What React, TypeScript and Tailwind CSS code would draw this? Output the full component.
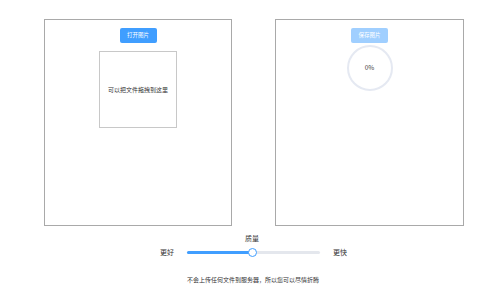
import React from "react";

const font = { fontFamily: '"Noto Sans CJK SC", "Noto Sans", sans-serif' };

export default function App() {
  return (
    <div className="w-[500px] h-[288px] bg-white overflow-hidden" style={font}>
      <div className="flex pl-[44px] pt-[19px] gap-[43px]">
        <div className="w-[188px] h-[207px] border border-[#a9a9a9] flex flex-col items-center pt-[8px]">
          <div className="w-[37px] h-[15px] rounded-[2px] bg-[#409eff] text-white text-[5.5px] flex items-center justify-center">
            打开图片
          </div>
          <div className="mt-[8px] w-[78px] h-[77px] border border-[#c8c8c8] flex items-center justify-center text-[6px] text-[#333]">
            可以把文件拖拽到这里
          </div>
        </div>
        <div className="w-[189px] h-[207px] border border-[#a9a9a9] flex flex-col items-center pt-[8px]">
          <div className="w-[37px] h-[15px] rounded-[2px] bg-[#a0cfff] text-white text-[5.5px] flex items-center justify-center">
            保存图片
          </div>
          <div className="mt-[2px] w-[46px] h-[46px] rounded-full border-[2.5px] border-[#e5e9f2] flex items-center justify-center text-[6.5px] text-[#444]">
            0%
          </div>
        </div>
      </div>
      <div className="flex justify-center pl-[4px] mt-[9px] text-[7px] leading-none text-[#333]">质量</div>
      <div className="flex items-center mt-[4px] h-[12px] pl-[160px]">
        <span className="text-[7px] text-[#333] w-[16px]">更好</span>
        <div className="relative ml-[11px] w-[133px] h-[3px] rounded-full bg-[#e4e7ed]">
          <div className="absolute left-0 top-0 h-[3px] w-[66px] rounded-full bg-[#409eff]" />
          <div className="absolute left-[61px] top-[-3px] w-[9px] h-[9px] rounded-full bg-white border-[1.5px] border-[#409eff]" />
        </div>
        <span className="ml-[13px] text-[7px] text-[#333]">更快</span>
      </div>
      <div className="flex justify-center pl-[6px] mt-[17px] text-[6px] text-[#333]">
        不会上传任何文件到服务器，所以您可以尽情折腾
      </div>
    </div>
  );
}
